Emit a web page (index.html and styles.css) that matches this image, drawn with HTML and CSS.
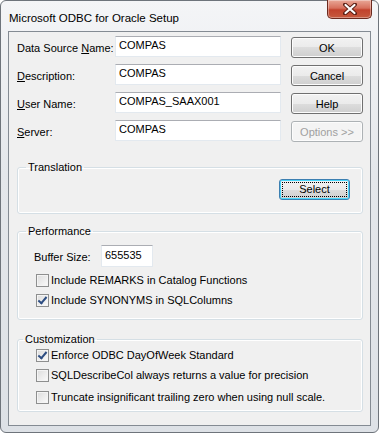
FILE: index.html
```html
<!DOCTYPE html>
<html lang="en">
<head>
  <meta charset="UTF-8">
  <title>Microsoft ODBC for Oracle Setup</title>
  <link rel="stylesheet" href="styles.css">
</head>
<body>
  <div class="window">
    <div class="titlebar">
      <span class="title">Microsoft ODBC for Oracle Setup</span>
      <button class="close" title="Close">
        <svg width="14" height="12" viewBox="0 0 14 12">
          <path d="M2 1.5 L12 10.5 M12 1.5 L2 10.5" stroke="#5a1e14" stroke-width="4" stroke-linecap="round"/>
          <path d="M2.5 2 L11.5 10 M11.5 2 L2.5 10" stroke="#fff" stroke-width="2.2" stroke-linecap="round"/>
        </svg>
      </button>
    </div>
    <div class="client">
      <div class="top">
        <div class="fields">
          <label>Data Source <u>N</u>ame:</label><input class="text" value="COMPAS">
          <label><u>D</u>escription:</label><input class="text" value="COMPAS">
          <label><u>U</u>ser Name:</label><input class="text" value="COMPAS_SAAX001">
          <label><u>S</u>erver:</label><input class="text" value="COMPAS">
        </div>
        <div class="buttons">
          <button class="btn">OK</button>
          <button class="btn">Cancel</button>
          <button class="btn">Help</button>
          <button class="btn" disabled>Options &gt;&gt;</button>
        </div>
      </div>

      <fieldset class="group translation">
        <legend>Translation</legend>
        <button class="btn default"><span class="focus">Select</span></button>
      </fieldset>

      <fieldset class="group performance">
        <legend>Performance</legend>
        <div class="buffer">
          <label>Buffer Size:</label><input class="text" value="655535">
        </div>
        <div class="check"><span class="box"></span>Include REMARKS in Catalog Functions</div>
        <div class="check"><span class="box checked"></span>Include SYNONYMS in SQLColumns</div>
      </fieldset>

      <fieldset class="group customization">
        <legend>Customization</legend>
        <div class="check"><span class="box checked"></span>Enforce ODBC DayOfWeek Standard</div>
        <div class="check"><span class="box"></span>SQLDescribeCol always returns a value for precision</div>
        <div class="check"><span class="box"></span>Truncate insignificant trailing zero when using null scale.</div>
      </fieldset>
    </div>
  </div>
</body>
</html>
```

FILE: styles.css
```css
body {
  margin: 0;
  background: #fff;
  font-family: 'Liberation Sans', Arial, sans-serif;
  font-size: 11px;
  color: #000;
}
.window {
  width: 379px;
  height: 433px;
  box-sizing: border-box;
  border: 1px solid #6e747b;
  border-radius: 6px;
  background: linear-gradient(#f4f5f7, #e4e7eb 40%, #dde1e6);
  padding: 0 7px 6px 7px;
  display: flex;
  flex-direction: column;
}
.titlebar {
  height: 30px;
  display: flex;
  align-items: flex-start;
  justify-content: space-between;
}
.title {
  margin: 10px 0 0 1px;
  font-size: 11.5px;
  line-height: 14px;
  color: #000;
}
.close {
  width: 45px;
  height: 19px;
  margin: -1px -1px 0 0;
  padding: 0;
  border: 1px solid #6b2a1f;
  border-top: none;
  border-radius: 0 0 5px 5px;
  background: linear-gradient(#e9a898, #d7705d 45%, #c1422c 55%, #c55a3f);
  box-shadow: inset 0 0 0 1px rgba(255,255,255,0.35);
  display: flex;
  align-items: center;
  justify-content: center;
}
.client {
  flex: 1;
  border: 1px solid #848b93;
  background: #f0f0f0;
  padding: 4px 7px 9px 8px;
}
.top {
  display: flex;
  gap: 10px;
}
.fields {
  display: grid;
  grid-template-columns: 98px 166px;
  grid-auto-rows: 21px;
  row-gap: 7px;
  align-items: center;
}
.fields label {
  padding-top: 2px;
}
.text {
  box-sizing: border-box;
  height: 21px;
  margin: 0;
  padding: 0 3px 3px;
  border: 1px solid #e3e9ef;
  border-top-color: #abadb3;
  background: #fff;
  font-family: inherit;
  font-size: 11px;
  color: #000;
  outline: none;
}
.buttons {
  display: flex;
  flex-direction: column;
  gap: 7px;
  padding-top: 1px;
}
.btn {
  box-sizing: border-box;
  width: 72px;
  height: 21px;
  padding: 0;
  border: 1px solid #707070;
  border-radius: 3px;
  background: linear-gradient(#f2f2f2, #ebebeb 50%, #dddddd 50%, #cfcfcf);
  box-shadow: inset 0 0 0 1px #fcfcfc;
  font-family: inherit;
  font-size: 11px;
  color: #000;
}
.btn:disabled {
  border-color: #adb2b5;
  background: #f4f4f4;
  color: #a0a0a0;
}
.group {
  margin: 19px 0 0;
  padding: 0 12px 8px 16px;
  border: 1px solid #d5dfe5;
  border-radius: 3px;
  box-shadow: inset 0 0 0 1px #fff;
}
.group legend {
  padding: 0 2px;
  margin-left: -8px;
  line-height: 13px;
}
.translation {
  display: flex;
  justify-content: flex-end;
  padding-bottom: 13px;
}
.translation .btn {
  margin-top: 5px;
  width: 71px;
  border-color: #3c7fb1;
  box-shadow: inset 0 0 0 1px #48d7fb;
  padding: 2px;
}
.focus {
  display: block;
  height: 100%;
  box-sizing: border-box;
  border: 1px dotted #000;
  line-height: 13px;
}
.performance {
  margin-top: 11px;
  padding-bottom: 12px;
}
.buffer {
  display: flex;
  align-items: center;
  margin-top: 7px;
}
.buffer label {
  width: 67px;
  padding-top: 2px;
}
.buffer .text {
  width: 52px;
  height: 22px;
}
.check {
  display: flex;
  align-items: center;
  height: 13px;
  margin-left: 2px;
  gap: 2px;
  line-height: 13px;
}
.performance .check {
  margin-top: 7px;
}
.performance .check:first-of-type {
  margin-top: 10px;
}
.customization {
  margin-top: 13px;
  padding-bottom: 7px;
}
.customization legend {
  margin-left: -11px;
}
.customization .check {
  margin-top: 7px;
}
.customization .check:first-of-type {
  margin-top: 3px;
}
.customization .check:nth-of-type(3) {
  margin-top: 9px;
}
.box {
  box-sizing: border-box;
  width: 13px;
  height: 13px;
  border: 1px solid #8e8f8f;
  background: linear-gradient(135deg, #dcdcdc, #fbfbfb);
  box-shadow: inset 0 0 0 1px #f4f4f4;
  position: relative;
}
.box.checked::after {
  content: "";
  position: absolute;
  left: 3px;
  top: 0px;
  width: 3px;
  height: 7px;
  border: solid #2d4d82;
  border-width: 0 2px 2px 0;
  transform: rotate(40deg);
}
```
